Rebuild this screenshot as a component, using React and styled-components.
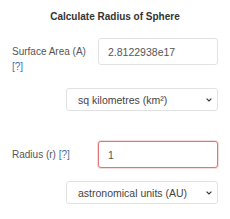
import React from "react";
import styled, { createGlobalStyle } from "styled-components";

const Global = createGlobalStyle`
  html, body { margin: 0; padding: 0; background: #fff; }
  body { font-family: "Liberation Sans", Arial, sans-serif; }
  * { box-sizing: border-box; }
`;

const Page = styled.div`
  width: 230px;
  padding: 10px 12px 0 12px;
`;

const Title = styled.div`
  text-align: center;
  font-weight: 700;
  font-size: 10px;
  line-height: 14px;
  color: #333;
`;

const Row = styled.div`
  display: flex;
  align-items: flex-start;
  justify-content: space-between;
  margin-top: ${(p) => p.$mt}px;
`;

const Label = styled.label`
  width: 80px;
  padding-top: 6px;
  font-size: 10px;
  line-height: 15px;
  color: #555;
`;

const Help = styled.a`
  color: #3f72a8;
  text-decoration: none;
`;

const Input = styled.input`
  width: 120px;
  height: 27px;
  padding: 0 9px;
  font-family: inherit;
  font-size: 10.5px;
  color: #555;
  background: #fff;
  border: 1px solid ${(p) => (p.$invalid ? "#e07575" : "#e2e2e2")};
  border-radius: 3px;
  box-shadow: ${(p) => (p.$invalid ? "0 0 0 1px rgba(224,117,117,0.25)" : "none")};
  outline: none;
`;

const SelectRow = styled.div`
  display: flex;
  justify-content: flex-end;
  margin-top: ${(p) => p.$mt}px;
`;

const SelectWrap = styled.div`
  position: relative;
  width: 152px;
  height: 23px;
`;

const Select = styled.select`
  appearance: none;
  -webkit-appearance: none;
  width: 100%;
  height: 100%;
  padding: 0 20px 0 11px;
  font-family: inherit;
  font-size: 10.5px;
  color: #444;
  background: #fff;
  border: 1px solid #e2e2e2;
  border-radius: 3px;
  outline: none;
`;

const Chevron = styled.svg`
  position: absolute;
  right: 6px;
  top: 50%;
  margin-top: -2px;
  width: 6px;
  height: 4px;
  pointer-events: none;
`;

function UnitSelect({ value }) {
  return (
    <SelectWrap>
      <Select defaultValue={value}>
        <option value={value}>{value}</option>
      </Select>
      <Chevron viewBox="0 0 6 4">
        <path d="M0.6 0.6 L3 3 L5.4 0.6" fill="none" stroke="#333" strokeWidth="1.1" />
      </Chevron>
    </SelectWrap>
  );
}

export default function App() {
  return (
    <>
      <Global />
      <Page>
        <Title>Calculate Radius of Sphere</Title>
        <Row $mt={14}>
          <Label>
            Surface Area (A) <Help href="#">[?]</Help>
          </Label>
          <Input defaultValue="2.8122938e17" />
        </Row>
        <SelectRow $mt={14}>
          <UnitSelect value="sq kilometres (km²)" />
        </SelectRow>
        <Row $mt={30}>
          <Label>
            Radius (r) <Help href="#">[?]</Help>
          </Label>
          <Input $invalid defaultValue="1" />
        </Row>
        <SelectRow $mt={13}>
          <UnitSelect value="astronomical units (AU)" />
        </SelectRow>
      </Page>
    </>
  );
}
